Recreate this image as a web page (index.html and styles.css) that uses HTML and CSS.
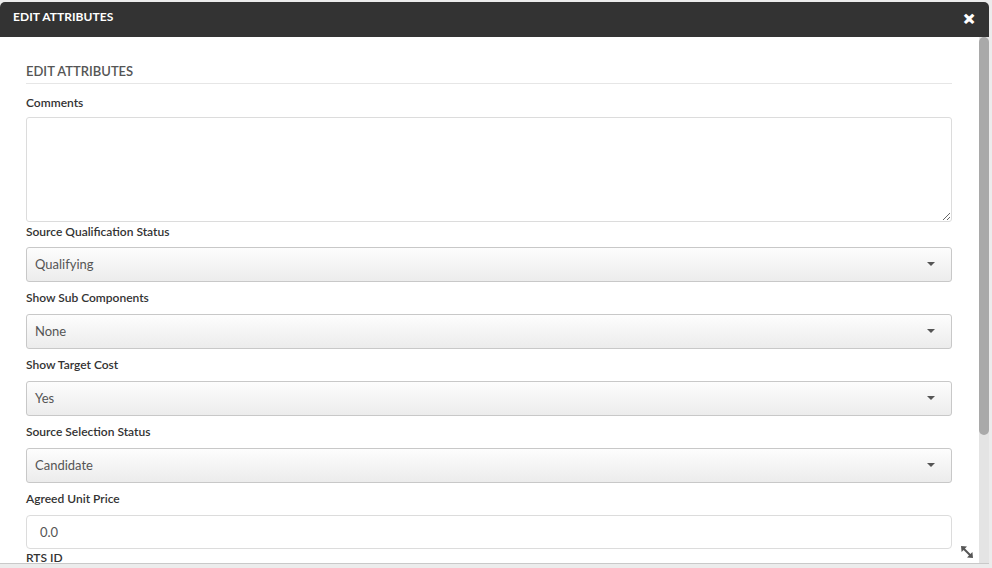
FILE: index.html
```html
<!DOCTYPE html>
<html>
<head>
<meta charset="utf-8">
<title>Edit Attributes</title>
<link rel="stylesheet" href="styles.css">
</head>
<body>
<div class="page">
  <div class="dialog">
    <div class="dialog-header">
      <span class="dialog-title">EDIT ATTRIBUTES</span>
      <span class="close">&#x2715;</span>
    </div>
    <div class="dialog-main">
      <div class="dialog-body">
        <div class="section-title">EDIT ATTRIBUTES</div>
        <form class="form">
          <label class="label label-first">Comments</label>
          <textarea class="textarea"></textarea>

          <label class="label label-after-area">Source Qualification Status</label>
          <div class="select"><span>Qualifying</span><span class="caret"></span></div>

          <label class="label">Show Sub Components</label>
          <div class="select"><span>None</span><span class="caret"></span></div>

          <label class="label">Show Target Cost</label>
          <div class="select"><span>Yes</span><span class="caret"></span></div>

          <label class="label">Source Selection Status</label>
          <div class="select"><span>Candidate</span><span class="caret"></span></div>

          <label class="label">Agreed Unit Price</label>
          <div class="input input-first">0.0</div>

          <label class="label label-tight">RTS ID</label>
          <div class="input"></div>
        </form>
      </div>
      <div class="scrollbar"><div class="thumb"></div></div>
    </div>
    <svg class="resize" width="12" height="12" viewBox="0 0 12 12">
      <line x1="2.5" y1="2.5" x2="9.5" y2="9.5" stroke="#555" stroke-width="2"/>
      <polygon points="0,0 6,0.6 0.6,6" fill="#555"/>
      <polygon points="12,12 6,11.4 11.4,6" fill="#555"/>
    </svg>
  </div>
</div>
</body>
</html>
```

FILE: styles.css
```css
* { box-sizing: border-box; }
html, body { margin: 0; padding: 0; }
body {
  background: #ececec;
  font-family: Lato, "Open Sans", "Liberation Sans", sans-serif;
  width: 992px;
  height: 568px;
  overflow: hidden;
}
.page {
  padding-top: 2px;
  height: 568px;
  background: #ececec;
}
.dialog {
  position: relative;
  width: 989px;
  height: 562px;
  background: #fff;
  border-bottom: 1px solid #c9c9c9;
  border-top-left-radius: 5px;
  border-top-right-radius: 5px;
  overflow: hidden;
  display: flex;
  flex-direction: column;
}
.dialog-header {
  height: 35px;
  flex: none;
  background: #333333;
  display: flex;
  align-items: flex-start;
  justify-content: space-between;
  padding: 7px 14px 0 13px;
}
.dialog-title {
  color: #fff;
  font-size: 12px;
  font-weight: 700;
  line-height: 16px;
  letter-spacing: 0.05px;
}
.close {
  color: #fff;
  font-size: 14px;
  font-weight: 900;
  line-height: 18px;
  margin-top: 1px;
  font-family: "DejaVu Sans", sans-serif;
  -webkit-text-stroke: 1.6px #fff;
}
.dialog-main {
  flex: 1;
  display: flex;
  min-height: 0;
}
.dialog-body {
  flex: 1;
  overflow: hidden;
  padding: 0 27px 0 26px;
}
.scrollbar {
  width: 10px;
  flex: none;
  background: #e4e4e4;
}
.thumb {
  height: 398px;
  background: #a9a9a9;
  border-radius: 5px;
}
.section-title {
  margin-top: 26px;
  font-size: 13px;
  line-height: 16px;
  color: #555;
  font-family: "Lato Semibold", "Lato Medium", Lato, sans-serif;
  font-weight: 600;
  padding-bottom: 4px;
  border-bottom: 1px solid #e6e6e6;
}
.form {
  display: flex;
  flex-direction: column;
}
.label {
  display: block;
  font-size: 12px;
  font-family: "Lato Semibold", "Lato Medium", Lato, sans-serif;
  font-weight: 600;
  color: #333;
  line-height: 16px;
  margin: 8px 0;
}
.label-first { margin-top: 11px; margin-bottom: 6px; }
.label-after-area { margin-top: 2px; margin-bottom: 7px; }
.label-tight { margin-top: 1px; }
.textarea {
  display: block;
  width: 100%;
  height: 105px;
  border: 1px solid #dcdcdc;
  border-radius: 3px;
  resize: vertical;
  margin: 0;
  font-family: inherit;
}
.select {
  height: 35px;
  border: 1px solid #c8c8c8;
  border-radius: 3px;
  background: linear-gradient(180deg, #fdfdfd 0%, #ececec 100%);
  display: flex;
  align-items: center;
  justify-content: space-between;
  padding: 0 16px 1px 8px;
  font-size: 13px;
  color: #555;
}
.caret {
  width: 0;
  height: 0;
  border-left: 4px solid transparent;
  border-right: 4px solid transparent;
  border-top: 4px solid #555;
}
.input {
  height: 34px;
  border: 1px solid #dcdcdc;
  border-radius: 4px;
  background: #fff;
  display: flex;
  align-items: center;
  padding: 0 13px 1px;
  font-size: 13px;
  color: #555;
}
.resize {
  position: absolute;
  right: 16px;
  bottom: 5px;
}
```
